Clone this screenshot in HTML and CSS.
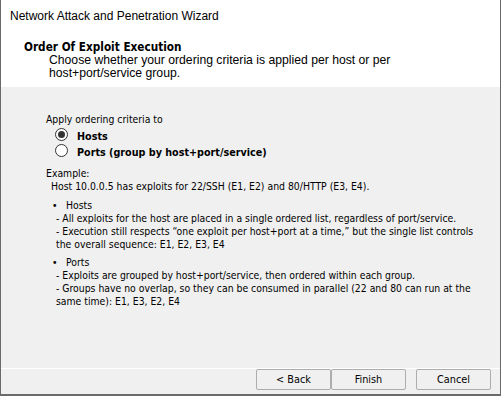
FILE: index.html
```html
<!DOCTYPE html>
<html>
<head>
<meta charset="utf-8">
<link rel="stylesheet" href="styles.css">
</head>
<body>
<div class="window">
  <div class="header">
    <div class="title">Network Attack and Penetration Wizard</div>
    <div class="page-title">Order Of Exploit Execution</div>
    <div class="page-sub">Choose whether your ordering criteria is applied per host or per<br>host+port/service group.</div>
  </div>
  <div class="content">
    <div class="group-label">Apply ordering criteria to</div>
    <div class="radio-row"><span class="radio checked"></span><span class="radio-label">Hosts</span></div>
    <div class="radio-row"><span class="radio"></span><span class="radio-label">Ports (group by host+port/service)</span></div>
    <div class="example">
      <div class="ex-title">Example:</div>
      <div class="ex-host">Host 10.0.0.5 has exploits for 22/SSH (E1, E2) and 80/HTTP (E3, E4).</div>
      <div class="bullet"><span class="dot">•</span><span>Hosts</span></div>
      <div class="ex-lines">- All exploits for the host are placed in a single ordered list, regardless of port/service.<br>- Execution still respects “one exploit per host+port at a time,” but the single list controls<br>the overall sequence: E1, E2, E3, E4</div>
      <div class="bullet second"><span class="dot">•</span><span>Ports</span></div>
      <div class="ex-lines">- Exploits are grouped by host+port/service, then ordered within each group.<br>- Groups have no overlap, so they can be consumed in parallel (22 and 80 can run at the<br>same time): E1, E3, E2, E4</div>
    </div>
  </div>
  <div class="footer">
    <button class="btn back">&lt; Back</button>
    <button class="btn finish">Finish</button>
    <button class="btn cancel">Cancel</button>
  </div>
</div>
</body>
</html>
```

FILE: styles.css
```css
html, body {
  margin: 0;
  padding: 0;
  background: #f0f0f0;
}
body {
  font-family: "DejaVu Sans Condensed", "DejaVu Sans", sans-serif;
  font-size: 10.35px;
  color: #000;
}
.window {
  width: 501px;
  height: 396px;
  box-sizing: border-box;
  border-left: 1px solid #6a6a6a;
  border-right: 1px solid #6a6a6a;
  border-bottom: 2px solid #6a6a6a;
  display: flex;
  flex-direction: column;
  background: #f0f0f0;
}
.header {
  background: #fff;
  height: 87px;
  box-sizing: border-box;
  padding-top: 8px;
}
.title {
  font-family: "Liberation Sans", Arial, sans-serif;
  font-size: 12px;
  line-height: 16px;
  padding-left: 9px;
}
.page-title {
  font-weight: bold;
  font-size: 11.7px;
  line-height: 13px;
  margin-top: 17px;
  padding-left: 23px;
}
.page-sub {
  font-family: "Liberation Sans", Arial, sans-serif;
  font-size: 12.2px;
  line-height: 13px;
  padding-left: 48px;
}
.content {
  flex: 1;
  padding: 26px 0 0 45px;
  border-bottom: 1px solid #fff;
}
.group-label {
  line-height: 13px;
}
.radio-row {
  display: flex;
  align-items: center;
  height: 16px;
  padding-left: 9px;
}
.group-label + .radio-row {
  margin-top: 2px;
}
.radio {
  width: 11px;
  height: 11px;
  border: 1px solid #333;
  border-radius: 50%;
  background: #fff;
  position: relative;
  margin-right: 9px;
  margin-top: -3px;
}
.radio.checked::after {
  content: "";
  position: absolute;
  left: 2px;
  top: 2px;
  width: 7px;
  height: 7px;
  border-radius: 50%;
  background: #333;
}
.radio-label {
  font-weight: bold;
  font-size: 10.7px;
}
.example {
  margin-top: 7px;
  line-height: 13px;
}
.ex-host {
  padding-left: 5px;
}
.bullet {
  display: flex;
  margin-top: 6px;
  padding-left: 6px;
}
.bullet.second {
  margin-top: 5px;
}
.dot {
  width: 14px;
}
.ex-lines {
  padding-left: 10px;
  white-space: nowrap;
}
.footer {
  display: flex;
  padding: 0 0 4px 255px;
  height: 21px;
  margin-top: auto;
}
.btn {
  font-family: inherit;
  font-size: 10.8px;
  width: 75px;
  height: 21px;
  border: 1px solid #adadad;
  border-radius: 2px;
  background: #f0f0f0;
  color: #000;
  padding: 0;
  margin: 0;
}
.btn.cancel {
  margin-left: 10px;
}
```
